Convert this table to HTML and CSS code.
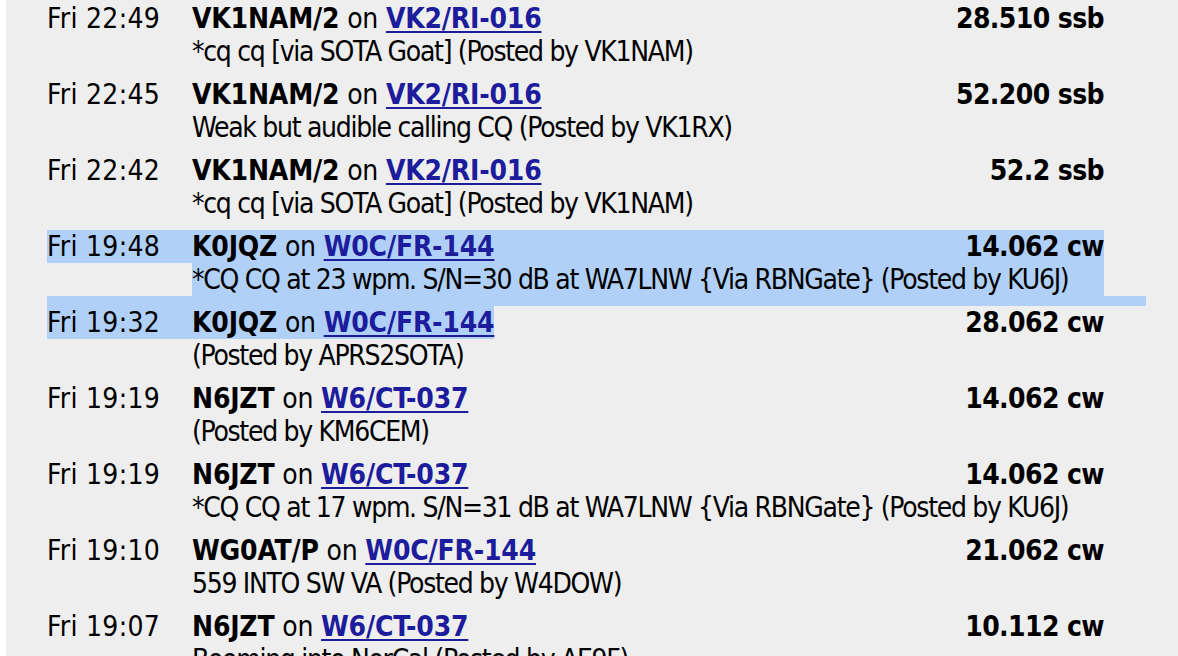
FILE: index.html
```html
<!DOCTYPE html>
<html lang="en">
<head>
    <meta charset="UTF-8">
    <title>SOTA Spots</title>
    <link rel="stylesheet" href="styles.css">
</head>
<body>
    <div class="spots">
        <div class="spot">
            <div class="time">Fri 22:49</div>
            <div class="call"><b>VK1NAM/2</b> on <a href="#">VK2/RI-016</a></div>
            <div class="freq">28.510 ssb</div>
            <div class="comment">*cq cq [via SOTA Goat] (Posted by VK1NAM)</div>
        </div>
        <div class="gap"></div>

        <div class="spot">
            <div class="time">Fri 22:45</div>
            <div class="call"><b>VK1NAM/2</b> on <a href="#">VK2/RI-016</a></div>
            <div class="freq">52.200 ssb</div>
            <div class="comment">Weak but audible calling CQ (Posted by VK1RX)</div>
        </div>
        <div class="gap"></div>

        <div class="spot">
            <div class="time">Fri 22:42</div>
            <div class="call"><b>VK1NAM/2</b> on <a href="#">VK2/RI-016</a></div>
            <div class="freq">52.2 ssb</div>
            <div class="comment">*cq cq [via SOTA Goat] (Posted by VK1NAM)</div>
        </div>
        <div class="gap"></div>

        <div class="spot selected">
            <div class="time">Fri 19:48</div>
            <div class="call"><b>K0JQZ</b> on <a href="#">W0C/FR-144</a></div>
            <div class="freq">14.062 cw</div>
            <div class="comment">*CQ CQ at 23 wpm. S/N=30 dB at WA7LNW {Via RBNGate} (Posted by KU6J)</div>
        </div>
        <div class="gap selected"></div>

        <div class="spot">
            <div class="time sel">Fri 19:32</div>
            <div class="call"><span class="sel"><b>K0JQZ</b> on <a href="#">W0C/FR-144</a></span></div>
            <div class="freq">28.062 cw</div>
            <div class="comment">(Posted by APRS2SOTA)</div>
        </div>
        <div class="gap"></div>

        <div class="spot">
            <div class="time">Fri 19:19</div>
            <div class="call"><b>N6JZT</b> on <a href="#">W6/CT-037</a></div>
            <div class="freq">14.062 cw</div>
            <div class="comment">(Posted by KM6CEM)</div>
        </div>
        <div class="gap"></div>

        <div class="spot">
            <div class="time">Fri 19:19</div>
            <div class="call"><b>N6JZT</b> on <a href="#">W6/CT-037</a></div>
            <div class="freq">14.062 cw</div>
            <div class="comment">*CQ CQ at 17 wpm. S/N=31 dB at WA7LNW {Via RBNGate} (Posted by KU6J)</div>
        </div>
        <div class="gap"></div>

        <div class="spot">
            <div class="time">Fri 19:10</div>
            <div class="call"><b>WG0AT/P</b> on <a href="#">W0C/FR-144</a></div>
            <div class="freq">21.062 cw</div>
            <div class="comment">559 INTO SW VA (Posted by W4DOW)</div>
        </div>
        <div class="gap"></div>

        <div class="spot">
            <div class="time">Fri 19:07</div>
            <div class="call"><b>N6JZT</b> on <a href="#">W6/CT-037</a></div>
            <div class="freq">10.112 cw</div>
            <div class="comment">Booming into NorCal (Posted by AE9F)</div>
        </div>
        <div class="gap"></div>
    </div>
</body>
</html>
```

FILE: styles.css
```css
body {
    margin: 0;
    background-color: white;
    font-family: "DejaVu Sans Condensed", "DejaVu Sans", sans-serif;
    font-stretch: semi-condensed;
    font-size: 28px;
    line-height: 33px;
    color: #000;
    overflow: hidden;
}

.spots {
    margin-left: 6px;
    min-height: 656px;
    background-color: #eeeeee;
    padding: 2px 32px 0 41px;
}

.spot {
    display: grid;
    grid-template-columns: 145px 1fr auto;
    padding-right: 42px;
}

.time {
    white-space: nowrap;
    letter-spacing: 0.3px;
}

.call {
    white-space: nowrap;
    letter-spacing: -0.2px;
}

.call a {
    color: #1c1c9c;
    font-weight: bold;
    text-underline-offset: 3px;
}

.freq {
    font-weight: bold;
    text-align: right;
    white-space: nowrap;
    letter-spacing: -0.6px;
}

.comment {
    grid-column: 2 / 4;
    white-space: nowrap;
    letter-spacing: -1.3px;
}

.gap {
    height: 10px;
}

.selected .time,
.selected .call,
.selected .freq,
.selected .comment,
.gap.selected,
.sel {
    background-color: #b0d0f7;
}

span.sel {
    display: inline-block;
}
```
